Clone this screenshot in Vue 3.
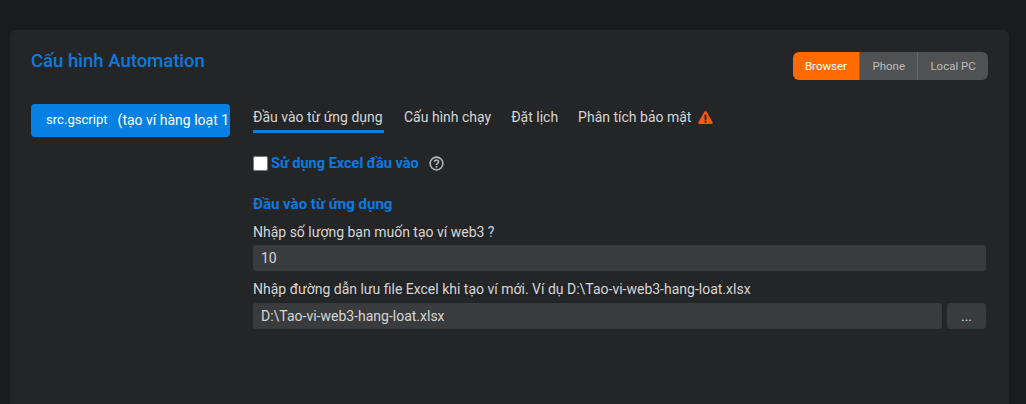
<template>
  <div class="page">
    <section class="card">
      <header class="card-head">
        <h2>Cấu hình Automation</h2>
        <div class="platforms">
          <button v-for="p in platforms" :key="p" type="button" :class="{ active: p === platform }">{{ p }}</button>
        </div>
      </header>

      <div class="card-body">
        <aside class="side">
          <div class="script-item"><span class="script-name">src.gscript</span><span>(tạo ví hàng loạt 1</span></div>
        </aside>

        <main class="content">
          <nav class="tabs">
            <a v-for="(t, i) in tabs" :key="t" :class="{ active: i === 0 }">
              {{ t }}
              <svg v-if="i === 3" class="warn" viewBox="0 0 16 16" width="15" height="15">
                <path fill="#f2590d" d="M8 1c-.5 0-.9.3-1.2.8L.4 13c-.5.9.1 2 1.2 2h12.800c1.100 0 1.700-1.100 1.200-2L9.200 1.800C8.900 1.300 8.500 1 8 1z" />
                <rect x="7" y="5" width="2" height="5.500" fill="#242527" />
                <rect x="7" y="11.500" width="2" height="2" fill="#242527" />
              </svg>
            </a>
          </nav>

          <div class="excel-row">
            <input type="checkbox" />
            <span class="excel-label">Sử dụng Excel đầu vào</span>
            <svg class="help" viewBox="0 0 16 16" width="15" height="15">
              <circle cx="8" cy="8" r="6.800" fill="none" stroke="#b5b5b5" stroke-width="1.700" />
              <path d="M5.800 6.300C5.900 5 6.800 4.300 8 4.300c1.300 0 2.200.8 2.200 1.900 0 1.700-2.200 1.700-2.200 3.300" fill="none" stroke="#b5b5b5" stroke-width="1.700" />
              <rect x="7.100" y="10.600" width="1.800" height="1.800" fill="#b5b5b5" />
            </svg>
          </div>

          <h3>Đầu vào từ ứng dụng</h3>

          <label class="field-label">Nhập số lượng bạn muốn tạo ví web3 ?</label>
          <input class="field" type="text" v-model="count" />

          <label class="field-label second">Nhập đường dẫn lưu file Excel khi tạo ví mới. Ví dụ D:\Tao-vi-web3-hang-loat.xlsx</label>
          <div class="path-row">
            <input class="field" type="text" v-model="path" />
            <button class="browse" type="button">...</button>
          </div>
        </main>
      </div>
    </section>
  </div>
</template>

<script setup>
import { ref } from 'vue';

const platforms = ['Browser', 'Phone', 'Local PC'];
const platform = ref('Browser');
const tabs = ['Đầu vào từ ứng dụng', 'Cấu hình chạy', 'Đặt lịch', 'Phân tích bảo mật'];
const count = ref('10');
const path = ref('D:\\Tao-vi-web3-hang-loat.xlsx');
</script>

<style>
html,
body {
  margin: 0;
  background: #1a1b1d;
  overflow: hidden;
}
</style>

<style scoped>
.page {
  height: 404px;
  padding: 30px 17px 0 10px;
  box-sizing: border-box;
  font-family: Roboto, "Noto Sans", sans-serif;
  font-size: 14px;
  color: #d6d6d6;
}

.card {
  height: 374px;
  background: #242527;
  border-radius: 6px 6px 0 0;
  padding: 20px 21px;
  box-sizing: border-box;
}

.card-head {
  display: flex;
  justify-content: space-between;
  align-items: flex-start;
  height: 54px;
}

.card-head h2 {
  margin: 0;
  font-size: 18.500px;
  line-height: 22px;
  font-weight: 500;
  color: #0a7ae0;
}

.platforms {
  display: flex;
  margin-top: 2px;
  border-radius: 6px;
  overflow: hidden;
}

.platforms button {
  height: 28px;
  padding: 0 12.200px;
  border: 0;
  border-left: 1px solid #6a6b6d;
  background: #505153;
  color: #bdbdbd;
  font: inherit;
  font-size: 11.500px;
}

.platforms button.active {
  border-left: 0;
  background: #ff6a00;
  color: #fff;
}

.card-body {
  display: flex;
  gap: 23px;
}

.side {
  width: 199px;
  flex: none;
}

.script-item {
  display: flex;
  height: 33px;
  line-height: 32px;
  padding-left: 15px;
  box-sizing: border-box;
  background: #0780e4;
  border-radius: 4px;
  color: #fff;
  white-space: nowrap;
  overflow: hidden;
}

.script-name {
  font-size: 13.100px;
  margin-right: 10px;
}

.content {
  flex: 1;
  min-width: 0;
  padding-right: 2px;
}

.tabs {
  display: flex;
  gap: 20px;
  height: 29px;
}

.tabs a {
  display: flex;
  align-items: flex-start;
  gap: 7px;
  height: 29px;
  line-height: 26px;
  box-sizing: border-box;
  color: #d6d6d6;
}

.tabs a.active {
  min-width: 131px;
  border-bottom: 3px solid #0780e4;
}

.warn {
  margin-top: 6px;
}

.excel-row {
  display: flex;
  align-items: center;
  margin-top: 20px;
  height: 20px;
}

.excel-row input {
  width: 15px;
  height: 15px;
  margin: 0 3px 0 0;
}

.excel-label {
  font-size: 14.500px;
  font-weight: 700;
  color: #0a7ae0;
}

.help {
  margin-left: 10px;
}

h3 {
  margin: 21px 0 0;
  font-size: 15px;
  line-height: 20px;
  font-weight: 700;
  color: #0a7ae0;
}

.field-label {
  display: block;
  margin-top: 9px;
  line-height: 18px;
}

.field {
  display: block;
  width: 100%;
  height: 26px;
  margin-top: 4px;
  padding: 0 8px;
  box-sizing: border-box;
  border: 0;
  border-radius: 3px;
  background: #3a3b3d;
  color: #d6d6d6;
  font: inherit;
  outline: none;
}

.path-row {
  display: flex;
  gap: 5px;
  margin-top: 5px;
}

.path-row .field,
.browse {
  margin-top: 0;
}

.browse {
  flex: none;
  width: 39px;
  height: 26px;
  border: 0;
  border-radius: 4px;
  background: #3a3b3d;
  color: #d6d6d6;
  font: inherit;
}
</style>
